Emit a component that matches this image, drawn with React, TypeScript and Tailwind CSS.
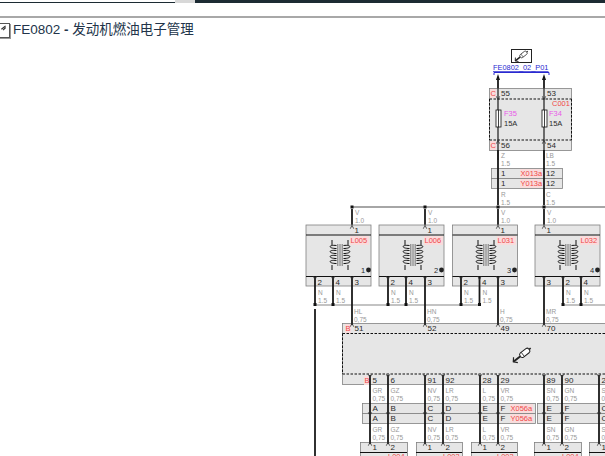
import React from 'react';

const GREY = '#e6e6e6';
const EDGE = '#808080';
const LABEL = '#999999';
const RED = '#f04848';

const T: React.FC<{ x: number; y: number; s?: number; c?: string; children: React.ReactNode }> = ({ x, y, s = 8, c = '#2a2a2a', children }) => (
  <text x={x} y={y} fontSize={s} fill={c}>{children}</text>
);

// little fork where a wire meets a connector, up = opens downwards
const Pin: React.FC<{ x: number; y: number; up?: boolean }> = ({ x, y, up }) => (
  <path
    d={up ? `M${x - 1.7} ${y + 1.7}L${x} ${y - 1.7}L${x + 1.7} ${y + 1.7}` : `M${x - 1.7} ${y - 1.7}L${x} ${y + 1.7}L${x + 1.7} ${y - 1.7}`}
    fill="none"
    stroke="#333333"
    strokeWidth="0.8"
  />
);

const Wire: React.FC<{ x: number; y1: number; y2: number; w?: number }> = ({ x, y1, y2, w = 1.8 }) => (
  <line x1={x} y1={y1} x2={x} y2={y2} stroke="#1a1a1a" strokeWidth={w} />
);

const WireLabel: React.FC<{ x: number; y: number; a: string; b: string }> = ({ x, y, a, b }) => (
  <>
    <T x={x} y={y} s={6.5} c={LABEL}>{a}</T>
    <T x={x} y={y + 7.5} s={6.5} c={LABEL}>{b}</T>
  </>
);

const RedTag: React.FC<{ x: number; y: number; w: number; children: string }> = ({ x, y, w, children }) => (
  <>
    <rect x={x} y={y - 7} width={w} height={9} fill="#f9dcdc" />
    <T x={x + 0.5} y={y} s={7.5} c={RED}>{children}</T>
  </>
);

// one winding: separate shallow arcs, leads at the outer side
const Bumps = (cx: number, cy: number, side: number) => {
  const inner = cx + side * 3.5;
  const outer = cx + side * 12;
  const lead = cx + side * 8;
  let d = `M${lead} ${cy - 15}V${cy - 10}`;
  for (let i = 0; i < 4; i++) {
    const y = cy - 9.5 + i * 5;
    d += `M${inner} ${y}C${outer} ${y - 1} ${outer} ${y + 3} ${inner} ${y + 3}`;
  }
  d += `M${lead} ${cy + 10}V${cy + 15}`;
  return d;
};

const Coil: React.FC<{ cx: number; cy: number }> = ({ cx, cy }) => (
  <g fill="none" stroke="#111111" strokeWidth="1">
    <path d={Bumps(cx, cy, -1)} />
    <path d={Bumps(cx, cy, 1)} />
    <path d={`M${cx - 2.2} ${cy - 11}V${cy + 11}M${cx} ${cy - 11}V${cy + 11}M${cx + 2.2} ${cy - 11}V${cy + 11}`} strokeWidth="0.8" stroke="#555555" />
  </g>
);

// the fuel injector drawing
const Injector: React.FC<{ x: number; y: number; k?: number }> = ({ x, y, k = 1 }) => (
  <g transform={`translate(${x} ${y}) rotate(-38) scale(${k})`} stroke="#222222" fill="none">
    <line x1={-11} y1={0} x2={-2} y2={0} strokeWidth="2" />
    <rect x={-2} y={-2.6} width={11} height={5.2} rx={2} fill="#ffffff" strokeWidth="1" />
    <line x1={1} y1={-2.6} x2={1} y2={2.6} strokeWidth="0.8" />
    <line x1={9} y1={0} x2={11} y2={0} strokeWidth="1.6" />
    <path d="M-8 -3.5L-11 0L-8 3.5" strokeWidth="1.2" />
  </g>
);

const Inductor: React.FC<{ x: number; name: string; num: string; topPin: number; pins: [number, string][]; tagX: number; coilX: number; numX: number }> = ({ x, name, num, topPin, pins, tagX, coilX, numX }) => (
  <g>
    <rect x={x} y={225} width={65} height={61} fill={GREY} stroke={EDGE} strokeWidth="0.8" />
    <line x1={x} y1={235} x2={x + 65} y2={235} stroke="#111111" strokeWidth="1.2" />
    <line x1={x} y1={276.5} x2={x + 65} y2={276.5} stroke="#111111" strokeWidth="1.2" />
    <T x={topPin + 2.5} y={233}>1</T>
    <RedTag x={tagX} y={243} w={19}>{name}</RedTag>
    <Coil cx={coilX} cy={255} />
    <T x={numX} y={273} s={7.5}>{num}</T>
    <circle cx={numX + 7.5} cy={270} r={2.4} fill="#222222" />
    {pins.map(([px, label]) => (
      <T key={label} x={px + 2.5} y={285}>{label}</T>
    ))}
  </g>
);

const dashed = { stroke: '#111111', strokeWidth: 1, strokeDasharray: '2.5 1.5' };

const Diagram = () => (
  <svg viewBox="0 44 605 412" className="block h-[412px] w-[605px]" fontFamily="'Liberation Sans', sans-serif">
    {/* icon and reference at the top */}
    <rect x={511.5} y={49.5} width={20} height={13} fill="#ffffff" stroke="#222222" strokeWidth="1" />
    <Injector x={521.5} y={56} k={0.72} />
    <text x={493} y={70} fontSize={7.4} fill="#2a2ad0" textDecoration="underline">FE0802_02_P01</text>
    <path d="M494 75V72.5H549V75" fill="none" stroke="#2a2ad0" strokeWidth="1" />
    <path d="M498 74L496 80H500Z M544 74L542 80H546Z" fill="#111111" />

    {/* fuse box C001 */}
    <rect x={489.5} y={88.5} width={82} height={62} fill={GREY} stroke={EDGE} strokeWidth="0.8" />
    <line x1={489.5} y1={99} x2={571.5} y2={99} {...dashed} />
    <line x1={489.5} y1={140} x2={571.5} y2={140} {...dashed} />
    <line x1={489.5} y1={99} x2={489.5} y2={140} {...dashed} />
    <line x1={571.5} y1={99} x2={571.5} y2={140} {...dashed} />
    <RedTag x={490} y={96} w={6}>C</RedTag>
    <RedTag x={490} y={148} w={6}>C</RedTag>
    <T x={501} y={96}>55</T>
    <T x={547} y={96}>53</T>
    <T x={501} y={148}>56</T>
    <T x={547} y={148}>54</T>
    <T x={552} y={106} s={7.5} c={RED}>C001</T>
    <T x={504} y={116} s={7.5} c="#e85ae8">F35</T>
    <T x={549} y={116} s={7.5} c="#e85ae8">F34</T>
    <T x={504} y={126} s={7.5}>15A</T>
    <T x={549} y={126} s={7.5}>15A</T>

    {/* wires through the fuses */}
    <Wire x={498} y1={78} y2={88} />
    <Wire x={544} y1={78} y2={88} />
    <Wire x={498} y1={88} y2={160} w={1.2} />
    <Wire x={544} y1={88} y2={160} w={1.2} />
    <rect x={496} y={110} width={5} height={17} fill="#ffffff" stroke="#111111" strokeWidth="0.8" />
    <rect x={542} y={110} width={5} height={17} fill="#ffffff" stroke="#111111" strokeWidth="0.8" />
    <line x1={498.5} y1={110} x2={498.5} y2={127} stroke="#111111" strokeWidth="0.8" />
    <line x1={544.5} y1={110} x2={544.5} y2={127} stroke="#111111" strokeWidth="0.8" />
    <Pin x={498} y={98} />
    <Pin x={544} y={98} />
    <Pin x={498} y={142} up />
    <Pin x={544} y={142} up />

    <WireLabel x={501} y={158} a="Z" b="1.5" />
    <WireLabel x={546} y={158} a="LB" b="1.5" />

    {/* inline connector X013a / Y013a */}
    <rect x={491.5} y={168.5} width={71} height={10} fill={GREY} stroke={EDGE} strokeWidth="0.8" />
    <rect x={491.5} y={178.5} width={71} height={10} fill={GREY} stroke={EDGE} strokeWidth="0.8" />
    <T x={501} y={176}>1</T>
    <T x={501} y={186}>1</T>
    <RedTag x={520} y={176} w={21}>X013a</RedTag>
    <RedTag x={520} y={186} w={21}>Y013a</RedTag>
    <T x={546} y={176}>12</T>
    <T x={546} y={186}>12</T>
    <Wire x={498} y1={150} y2={205} />
    <Wire x={544} y1={150} y2={205} />

    <WireLabel x={501} y={197} a="R" b="1.5" />
    <WireLabel x={546} y={197} a="C" b="1.5" />

    {/* supply rail */}
    <line x1={352} y1={207} x2={605} y2={207} stroke="#888888" strokeWidth="1.4" />
    {[352, 425, 498, 544].map(x => (
      <g key={x}>
        <Wire x={x} y1={209} y2={226} />
        <rect x={x - 1.5} y={205.5} width={3} height={3} fill="#111111" />
        <WireLabel x={x + 3} y={215} a="V" b="1.0" />
      </g>
    ))}

    <Inductor x={306} name="L005" num="1" topPin={352} pins={[[315, '2'], [333, '4'], [352, '3']]} tagX={350} coilX={340} numX={361} />
    <Inductor x={379} name="L006" num="2" topPin={425} pins={[[388, '2'], [406, '4'], [425, '3']]} tagX={424} coilX={413} numX={434} />
    <Inductor x={452.5} name="L031" num="3" topPin={498} pins={[[461, '2'], [479.5, '4'], [498, '3']]} tagX={497} coilX={486} numX={507} />
    <Inductor x={535} name="L032" num="4" topPin={544} pins={[[544, '3'], [563, '2'], [581, '4']]} tagX={580} coilX={568} numX={590} />
    {[352, 425, 498, 544].map(x => <Pin key={x} x={x} y={227} up />)}

    {/* ground wires */}
    <line x1={316} y1={305} x2={480} y2={305} stroke="#888888" strokeWidth="1.2" />
    <line x1={563} y1={305} x2={605} y2={305} stroke="#888888" strokeWidth="1.2" />
    {[315, 333, 388, 406, 461, 479.5, 563, 581].map(x => (
      <g key={x}>
        <Wire x={x} y1={277} y2={304} />
        <Pin x={x} y={278} />
        <rect x={x - 1.5} y={303} width={3} height={3} fill="#111111" />
        <WireLabel x={x + 3} y={295} a="N" b="1.5" />
      </g>
    ))}
    <Wire x={315} y1={309} y2={456} />

    {/* big control unit B */}
    <rect x={342.5} y={323.5} width={280} height={61} fill={GREY} stroke={EDGE} strokeWidth="0.8" />
    <line x1={342.5} y1={333.5} x2={605} y2={333.5} {...dashed} />
    <line x1={342.5} y1={374} x2={605} y2={374} {...dashed} />
    <line x1={342.5} y1={333.5} x2={342.5} y2={374} {...dashed} />
    <Injector x={522} y={355} />
    <RedTag x={345} y={331} w={6}>B</RedTag>
    <RedTag x={364} y={383} w={6}>B</RedTag>

    {([[352, 'HL', '51'], [425, 'HN', '52'], [498, 'H', '49'], [544, 'MR', '70']] as [number, string, string][]).map(([x, a, n]) => (
      <g key={n}>
        <Wire x={x} y1={277} y2={325} />
        <Pin x={x} y={278} />
        <Pin x={x} y={325} up />
        <WireLabel x={x + 2} y={314} a={a} b="0,75" />
        <T x={x + 2.5} y={331}>{n}</T>
      </g>
    ))}

    {/* second inline connector */}
    <rect x={362.5} y={403.5} width={173} height={10} fill={GREY} stroke={EDGE} strokeWidth="0.8" />
    <rect x={362.5} y={413.5} width={173} height={10} fill={GREY} stroke={EDGE} strokeWidth="0.8" />
    <rect x={537.5} y={403.5} width={80} height={10} fill={GREY} stroke={EDGE} strokeWidth="0.8" />
    <rect x={537.5} y={413.5} width={80} height={10} fill={GREY} stroke={EDGE} strokeWidth="0.8" />
    <RedTag x={510} y={411} w={23}>X056a</RedTag>
    <RedTag x={510} y={421} w={23}>Y056a</RedTag>

    {/* bottom row of inductors, cut by the window */}
    {[[360, 47], [416, 46], [471, 46], [534, 47], [589, 40]].map(([x, w]) => (
      <g key={x}>
        <rect x={x + 0.5} y={442.5} width={w} height={20} fill={GREY} stroke={EDGE} strokeWidth="0.8" />
        <line x1={x} y1={452.5} x2={x + w} y2={452.5} stroke="#111111" strokeWidth="1.2" />
      </g>
    ))}

    {/* pins from the unit down through the connector to the next row */}
    {([
      [370, '5', 'GR', 'A', '1'], [388, '6', 'GZ', 'B', '2'], [425, '91', 'NV', 'C', '1'], [443, '92', 'LR', 'D', '2'],
      [480, '28', 'L', 'E', '1'], [498, '29', 'VR', 'F', '2'], [544, '89', 'SN', 'E', '1'], [562, '90', 'GN', 'F', '2'], [599, '2', 'S', 'C', '1'],
    ] as [number, string, string, string, string][]).map(([x, n, w, letter, pin]) => (
      <g key={x}>
        <Wire x={x} y1={375} y2={444} />
        <Pin x={x} y={376} />
        <Pin x={x} y={414} />
        <Pin x={x} y={444} up />
        <T x={x + 2.5} y={383}>{n}</T>
        <WireLabel x={x + 2.5} y={393} a={w} b="0,75" />
        <WireLabel x={x + 2.5} y={432} a={w} b="0,75" />
        <T x={x + 2.5} y={411}>{letter}</T>
        <T x={x + 2.5} y={421}>{letter}</T>
        <T x={x + 2.5} y={450}>{pin}</T>
      </g>
    ))}
    <T x={388} y={459} s={7.5} c={RED}>L004</T>
    <T x={443} y={459} s={7.5} c={RED}>L003</T>
    <T x={497} y={459} s={7.5} c={RED}>L002</T>
    <T x={562} y={459} s={7.5} c={RED}>L004</T>
  </svg>
);

export default function App() {
  return (
    <div className="h-[456px] w-[605px] overflow-hidden bg-white font-['Liberation_Sans',sans-serif]">
      <div className="flex h-[3px] bg-white">
        <div className="w-[175px] border-b border-[#1c2b33]" />
        <div className="w-[20px] bg-[#d8d8d8]" />
        <div className="flex-1 bg-[#1c2b33]" />
      </div>
      <div className="h-[15px] border-b-2 border-[#a8a8a8]" />
      <div className="flex h-[26px] items-center gap-[3px] pb-[2px]">
        <div className="relative ml-[-3px] h-[15px] w-[13px] shrink-0 border border-[#555555] bg-white shadow-[1px_1px_0_#999999]">
          <svg viewBox="0 0 13 15" className="absolute inset-0 h-full w-full">
            <path d="M4 6L9 2M6 7L9 4" stroke="#333333" strokeWidth="1.4" fill="none" />
          </svg>
        </div>
        <h1 className="font-['Liberation_Sans','Noto_Sans_CJK_SC',sans-serif] text-[13.5px] leading-none text-[#22344a]">
          FE0802 <span className="font-bold">-</span> 发动机燃油电子管理
        </h1>
      </div>
      <Diagram />
    </div>
  );
}
